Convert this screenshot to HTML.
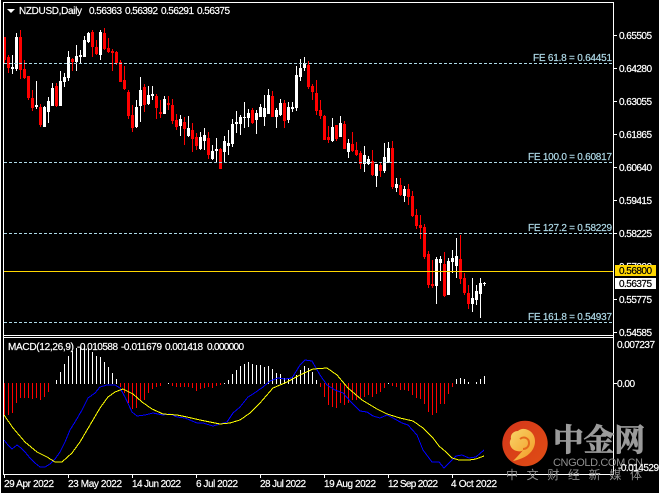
<!DOCTYPE html>
<html><head><meta charset="utf-8"><style>
html,body{margin:0;padding:0;background:#000;width:659px;height:493px;overflow:hidden}
svg{display:block}
text{font-family:"Liberation Sans",sans-serif;font-size:10px;fill:#fff;stroke:#fff;stroke-width:.2}
.l text{fill:#ADD8E6;stroke:#ADD8E6}
.k text{fill:#000;stroke:#000}
.c text{font-family:"Noto Serif CJK SC","Liberation Serif",serif;font-weight:700;font-size:31px;fill:#9b9b9b;stroke:#9b9b9b;stroke-width:.8}
.s text{font-family:"Liberation Sans","Noto Sans CJK SC",sans-serif;fill:#8e8e8e;stroke:none}
</style></head><body>
<svg width="659" height="493" viewBox="0 0 659 493" xmlns="http://www.w3.org/2000/svg">
<rect width="659" height="493" fill="#000"/>
<g shape-rendering="crispEdges">
<path fill="#f00" d="M4 37h1v26h-1zM3 37h3v23h-3zM8 55h1v18h-1zM7 57h3v11h-3zM20 30h1v49h-1zM19 37h3v33h-3zM24 60h1v19h-1zM23 69h3v9h-3zM28 76h1v24h-1zM27 76h3v22h-3zM32 90h1v21h-1zM31 98h3v10h-3zM40 104h1v23h-1zM39 107h3v18h-3zM56 83h1v24h-1zM55 86h3v20h-3zM72 58h1v13h-1zM71 59h3v3h-3zM92 30h1v27h-1zM91 32h3v15h-3zM96 40h1v15h-1zM95 47h3v7h-3zM104 28h1v22h-1zM103 33h3v16h-3zM108 38h1v15h-1zM107 48h3v4h-3zM112 49h1v22h-1zM111 51h3v2h-3zM116 51h1v14h-1zM115 52h3v11h-3zM120 60h1v22h-1zM119 62h3v20h-3zM124 66h1v24h-1zM123 80h3v9h-3zM128 90h1v29h-1zM127 92h3v24h-3zM132 105h1v27h-1zM131 115h3v13h-3zM144 84h1v28h-1zM143 87h3v18h-3zM156 94h1v25h-1zM155 96h3v12h-3zM160 100h1v18h-1zM159 112h3v2h-3zM168 96h1v14h-1zM167 103h3v2h-3zM172 99h1v25h-1zM171 105h3v16h-3zM176 114h1v16h-1zM175 120h3v7h-3zM184 117h1v28h-1zM183 122h3v7h-3zM192 123h1v29h-1zM191 130h3v9h-3zM196 133h1v17h-1zM195 137h3v9h-3zM208 132h1v27h-1zM207 138h3v17h-3zM220 148h1v21h-1zM219 149h3v20h-3zM252 108h1v16h-1zM251 110h3v13h-3zM272 91h1v26h-1zM271 96h3v21h-3zM284 100h1v28h-1zM283 103h3v18h-3zM308 61h1v28h-1zM307 65h3v22h-3zM312 84h1v16h-1zM311 86h3v6h-3zM316 80h1v35h-1zM315 93h3v18h-3zM320 100h1v19h-1zM319 110h3v6h-3zM324 115h1v25h-1zM323 116h3v24h-3zM328 126h1v17h-1zM327 137h3v3h-3zM336 125h1v16h-1zM335 125h3v14h-3zM344 121h1v28h-1zM343 124h3v25h-3zM352 132h1v20h-1zM351 144h3v7h-3zM356 142h1v14h-1zM355 150h3v5h-3zM360 151h1v18h-1zM359 153h3v11h-3zM372 150h1v26h-1zM371 161h3v14h-3zM380 163h1v14h-1zM379 165h3v6h-3zM392 141h1v48h-1zM391 148h3v39h-3zM400 178h1v18h-1zM399 185h3v10h-3zM408 184h1v21h-1zM407 189h3v8h-3zM412 191h1v26h-1zM411 196h3v20h-3zM416 209h1v20h-1zM415 215h3v11h-3zM420 215h1v24h-1zM419 225h3v3h-3zM424 224h1v35h-1zM423 227h3v30h-3zM428 251h1v37h-1zM427 254h3v31h-3zM432 260h1v28h-1zM431 284h3v2h-3zM444 252h1v45h-1zM443 264h3v32h-3zM460 235h1v49h-1zM459 259h3v20h-3zM464 273h1v22h-1zM463 278h3v15h-3zM468 285h1v24h-1zM467 293h3v11h-3z"/>
<path fill="#fff" d="M12 55h1v19h-1zM11 67h3v2h-3zM16 33h1v38h-1zM15 37h3v32h-3zM36 81h1v28h-1zM35 105h3v2h-3zM44 106h1v21h-1zM43 107h3v20h-3zM48 97h1v26h-1zM47 101h3v11h-3zM52 83h1v23h-1zM51 88h3v18h-3zM60 71h1v35h-1zM59 81h3v25h-3zM64 73h1v14h-1zM63 77h3v5h-3zM68 51h1v30h-1zM67 57h3v21h-3zM76 45h1v26h-1zM75 56h3v6h-3zM80 50h1v14h-1zM79 55h3v2h-3zM84 36h1v21h-1zM83 40h3v17h-3zM88 32h1v11h-1zM87 33h3v9h-3zM100 30h1v30h-1zM99 32h3v23h-3zM136 100h1v28h-1zM135 107h3v20h-3zM140 77h1v45h-1zM139 90h3v16h-3zM148 86h1v19h-1zM147 95h3v9h-3zM152 86h1v14h-1zM151 94h3v2h-3zM164 96h1v18h-1zM163 99h3v15h-3zM180 115h1v21h-1zM179 119h3v7h-3zM188 116h1v21h-1zM187 128h3v8h-3zM200 132h1v18h-1zM199 137h3v12h-3zM204 128h1v22h-1zM203 135h3v6h-3zM212 145h1v15h-1zM211 151h3v8h-3zM216 138h1v25h-1zM215 149h3v2h-3zM224 136h1v26h-1zM223 141h3v11h-3zM228 130h1v25h-1zM227 143h3v3h-3zM232 119h1v28h-1zM231 124h3v20h-3zM236 111h1v22h-1zM235 122h3v2h-3zM240 115h1v20h-1zM239 117h3v7h-3zM244 102h1v26h-1zM243 117h3v1h-3zM248 109h1v18h-1zM247 113h3v5h-3zM256 110h1v24h-1zM255 113h3v7h-3zM260 104h1v13h-1zM259 107h3v10h-3zM264 95h1v31h-1zM263 108h3v9h-3zM268 89h1v25h-1zM267 95h3v19h-3zM276 108h1v20h-1zM275 110h3v7h-3zM280 99h1v17h-1zM279 103h3v12h-3zM288 102h1v21h-1zM287 107h3v13h-3zM292 102h1v10h-1zM291 107h3v2h-3zM296 66h1v45h-1zM295 75h3v33h-3zM300 59h1v22h-1zM299 68h3v9h-3zM304 57h1v14h-1zM303 63h3v5h-3zM332 118h1v24h-1zM331 127h3v14h-3zM340 116h1v21h-1zM339 123h3v14h-3zM348 139h1v19h-1zM347 143h3v9h-3zM364 146h1v26h-1zM363 155h3v9h-3zM368 156h1v9h-1zM367 159h3v5h-3zM376 164h1v23h-1zM375 164h3v12h-3zM384 143h1v30h-1zM383 157h3v14h-3zM388 142h1v21h-1zM387 148h3v15h-3zM396 178h1v14h-1zM395 184h3v4h-3zM404 186h1v16h-1zM403 189h3v7h-3zM436 257h1v47h-1zM435 259h3v27h-3zM440 256h1v25h-1zM439 259h3v4h-3zM448 258h1v37h-1zM447 261h3v34h-3zM452 250h1v23h-1zM451 258h3v4h-3zM456 238h1v40h-1zM455 256h3v10h-3zM472 278h1v34h-1zM471 298h3v6h-3zM476 285h1v20h-1zM475 291h3v9h-3zM480 278h1v40h-1zM479 283h3v11h-3zM484 282h1v4h-1zM483 283h3v1h-3z"/>
<g stroke="#ADD8E6" stroke-dasharray="3 2" fill="none">
<path d="M4 63.5H613M4 162.5H613M4 233.5H613M4 322.5H613"/>
</g>
<rect x="4" y="271" width="609" height="1" fill="#FFD700"/>
<path fill="#f00" d="M4 383h1v32h-1zM8 383h1v32h-1zM12 383h1v30h-1zM16 383h1v20h-1zM20 383h1v15h-1zM24 383h1v15h-1zM28 383h1v15h-1zM32 383h1v16h-1zM36 383h1v15h-1zM40 383h1v17h-1zM44 383h1v14h-1zM48 383h1v9h-1zM120 383h1v4h-1zM124 383h1v10h-1zM128 383h1v20h-1zM132 383h1v26h-1zM136 383h1v25h-1zM140 383h1v18h-1zM144 383h1v17h-1zM148 383h1v10h-1zM152 383h1v6h-1zM156 383h1v4h-1zM160 383h1v3h-1zM172 383h1v3h-1zM176 383h1v4h-1zM180 383h1v4h-1zM184 383h1v4h-1zM188 383h1v4h-1zM192 383h1v5h-1zM196 383h1v8h-1zM200 383h1v6h-1zM204 383h1v5h-1zM208 383h1v4h-1zM212 383h1v5h-1zM216 383h1v3h-1zM220 383h1v2h-1zM320 383h1v4h-1zM324 383h1v14h-1zM328 383h1v22h-1zM332 383h1v24h-1zM336 383h1v25h-1zM340 383h1v20h-1zM344 383h1v22h-1zM348 383h1v20h-1zM352 383h1v17h-1zM356 383h1v17h-1zM360 383h1v15h-1zM364 383h1v14h-1zM368 383h1v12h-1zM372 383h1v14h-1zM376 383h1v11h-1zM380 383h1v9h-1zM384 383h1v5h-1zM392 383h1v3h-1zM396 383h1v4h-1zM400 383h1v7h-1zM404 383h1v7h-1zM408 383h1v8h-1zM412 383h1v12h-1zM416 383h1v15h-1zM420 383h1v16h-1zM424 383h1v21h-1zM428 383h1v29h-1zM432 383h1v32h-1zM436 383h1v30h-1zM440 383h1v21h-1zM444 383h1v21h-1zM448 383h1v11h-1zM452 383h1v4h-1z"/>
<path fill="#fff" d="M56 380h1v4h-1zM60 372h1v12h-1zM64 364h1v20h-1zM68 356h1v28h-1zM72 351h1v33h-1zM76 348h1v36h-1zM80 347h1v37h-1zM84 347h1v37h-1zM88 348h1v36h-1zM92 352h1v32h-1zM96 356h1v28h-1zM100 357h1v27h-1zM104 362h1v22h-1zM108 367h1v17h-1zM112 373h1v11h-1zM116 379h1v5h-1zM168 383h1v1h-1zM224 383h1v1h-1zM228 380h1v4h-1zM232 374h1v10h-1zM236 370h1v14h-1zM240 366h1v18h-1zM244 364h1v20h-1zM248 362h1v22h-1zM252 364h1v20h-1zM256 365h1v19h-1zM260 365h1v19h-1zM264 367h1v17h-1zM268 366h1v18h-1zM272 369h1v15h-1zM276 373h1v11h-1zM280 374h1v10h-1zM284 378h1v6h-1zM288 379h1v5h-1zM292 377h1v7h-1zM296 375h1v9h-1zM300 370h1v14h-1zM304 366h1v18h-1zM308 368h1v16h-1zM312 372h1v12h-1zM316 380h1v4h-1zM388 383h1v1h-1zM456 379h1v5h-1zM460 378h1v6h-1zM464 379h1v5h-1zM468 382h1v2h-1zM476 382h1v2h-1zM480 379h1v5h-1zM484 376h1v8h-1z"/>
</g>
<polyline shape-rendering="crispEdges" fill="none" stroke="#0000ff" stroke-width="1" points="4,440 8,445 12,449 17,445 21,448 25,452 30,458 35,463 40,467 45,467 50,464 55,459 60,452 65,442 70,430 75,422 82,410 88,398 95,393 100,387 107,385 115,385 120,388 125,397 132,412 137,416 145,415 153,413 163,415 170,414 177,417 185,418 197,423 203,423 213,426 220,424 227,422 233,413 240,407 248,397 253,394 263,387 270,381 278,378 285,379 292,378 300,365 305,360 312,361 320,375 327,385 335,390 343,393 352,403 360,411 367,412 373,416 380,418 387,415 393,418 402,423 408,425 417,435 423,450 432,462 439,462 444,468 449,463 456,456 462,455 469,458 476,457 484,450"/>
<polyline shape-rendering="crispEdges" fill="none" stroke="#ffff00" stroke-width="1" points="4,415 13,428 25,442 37,452 47,457 55,462 62,462 72,453 80,442 90,425 100,408 108,397 115,392 123,389 133,394 142,402 152,409 163,414 177,415 187,417 200,420 220,424 230,423 240,420 250,413 260,403 273,388 287,382 300,375 313,369 327,368 337,375 348,388 362,400 377,409 387,414 400,418 413,421 423,428 433,438 439,446 446,452 452,458 459,460 469,460 476,459 484,456"/>
<g shape-rendering="crispEdges">
<rect x="0" y="0" width="1" height="493" fill="#fff"/>
<rect x="3" y="2" width="611" height="1" fill="#fff"/>
<rect x="3" y="2" width="1" height="473" fill="#fff"/>
<rect x="613" y="2" width="1" height="473" fill="#fff"/>
<rect x="3" y="335" width="611" height="1" fill="#fff"/>
<rect x="3" y="337" width="611" height="1" fill="#fff"/>
<rect x="3" y="474" width="611" height="1" fill="#fff"/>
<path fill="#fff" d="M614 35h3v1h-3zM614 68h3v1h-3zM614 101h3v1h-3zM614 134h3v1h-3zM614 167h3v1h-3zM614 200h3v1h-3zM614 233h3v1h-3zM614 299h3v1h-3zM614 332h3v1h-3zM614 383h3v1h-3zM4 475h1v3h-1zM68 475h1v3h-1zM132 475h1v3h-1zM196 475h1v3h-1zM260 475h1v3h-1zM324 475h1v3h-1zM388 475h1v3h-1zM452 475h1v3h-1z"/>
</g>
<path d="M7 9h8l-4 4z" fill="#fff"/>
<text x="19" y="14" textLength="63">NZDUSD,Daily</text>
<text x="89" y="14" textLength="33">0.56363</text>
<text x="125" y="14" textLength="33">0.56392</text>
<text x="161" y="14" textLength="33">0.56291</text>
<text x="197" y="14" textLength="33">0.56375</text>
<g class="l">
<text x="533" y="61" textLength="79">FE 61.8 = 0.64451</text>
<text x="528" y="160" textLength="84">FE 100.0 = 0.60817</text>
<text x="528" y="231" textLength="84">FE 127.2 = 0.58229</text>
<text x="528" y="320" textLength="84">FE 161.8 = 0.54937</text>
</g>
<text x="619" y="39" textLength="33">0.65505</text>
<text x="619" y="72" textLength="33">0.64280</text>
<text x="619" y="105" textLength="33">0.63055</text>
<text x="619" y="138" textLength="33">0.61865</text>
<text x="619" y="171" textLength="33">0.60640</text>
<text x="619" y="204" textLength="33">0.59415</text>
<text x="619" y="237" textLength="33">0.58225</text>
<text x="619" y="270" textLength="33">0.57000</text>
<text x="619" y="303" textLength="33">0.55775</text>
<text x="619" y="336" textLength="33">0.54585</text>
<g shape-rendering="crispEdges">
<rect x="615" y="265" width="41" height="11" fill="#FFD700"/>
<rect x="615" y="278" width="41" height="11" fill="#fff"/>
</g>
<g class="k">
<text x="619" y="274" textLength="33">0.56800</text>
<text x="619" y="287" textLength="33">0.56375</text>
</g>
<text x="8" y="350" textLength="66">MACD(12,26,9)</text>
<text x="77" y="350" textLength="41">-0.010588</text>
<text x="121" y="350" textLength="41">-0.011679</text>
<text x="165" y="350" textLength="38">0.001418</text>
<text x="207" y="350" textLength="37">0.000000</text>
<text x="617" y="348" textLength="38">0.007237</text>
<text x="617" y="387" textLength="18">0.00</text>
<text x="4" y="487" textLength="50">29 Apr 2022</text>
<text x="68" y="487" textLength="54">23 May 2022</text>
<text x="132" y="487" textLength="49">14 Jun 2022</text>
<text x="196" y="487" textLength="42">6 Jul 2022</text>
<text x="260" y="487" textLength="46">28 Jul 2022</text>
<text x="324" y="487" textLength="52">19 Aug 2022</text>
<text x="388" y="487" textLength="50">12 Sep 2022</text>
<text x="451" y="487" textLength="46">4 Oct 2022</text>
<defs><linearGradient id="g" x1="0" y1="0" x2="1" y2="1"><stop offset="0" stop-color="#d4351b"/><stop offset="1" stop-color="#e04e14"/></linearGradient>
<linearGradient id="y" x1="0" y1="0" x2="1" y2="1"><stop offset="0" stop-color="#f8d468"/><stop offset="1" stop-color="#f39a24"/></linearGradient></defs>
<circle cx="525" cy="443.5" r="22.7" fill="url(#g)"/>
<path d="M513 461C522 459 529 456 533 449C537 442 535 433 528 430C524 428 520 429 518 431C514 431 510 434 511 439C508 443 511 450 517 451C520 452 523 451 524 449C519 455 516 458 513 461Z" fill="url(#y)"/>
<path d="M520 439C524 436 529 438 529 443C529 447 526 449 523 449" fill="none" stroke="#e4691c" stroke-width="2"/>
<g class="c"><text x="553" y="451" textLength="92" lengthAdjust="spacingAndGlyphs">中金网</text></g>
<g class="s">
<text x="553" y="466" textLength="90" style="font-size:11px">CNGOLD.COM.CN</text>
<text x="506" y="479" style="font-size:12px" textLength="136">中文财经新媒体</text>
</g>
<text x="618" y="471" textLength="41">-0.014529</text>
</svg>
</body></html>
